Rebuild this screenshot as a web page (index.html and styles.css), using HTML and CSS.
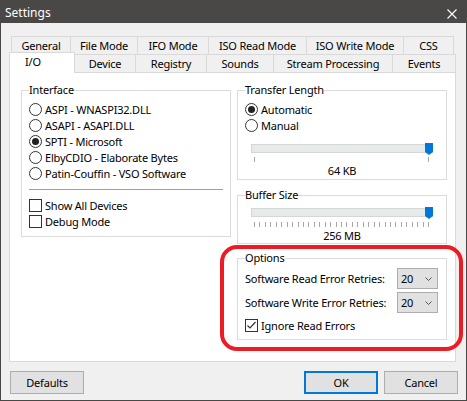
FILE: index.html
```html
<!DOCTYPE html>
<html>
<head>
<meta charset="utf-8">
<title>Settings</title>
<link rel="stylesheet" href="styles.css">
</head>
<body>
<div class="window">
  <div class="titlebar">
    <span class="title">Settings</span>
    <svg class="close" width="10" height="10" viewBox="0 0 10 10"><path d="M0.5 0.5 L9.5 9.5 M9.5 0.5 L0.5 9.5" stroke="#ffffff" stroke-width="1.1" fill="none"/></svg>
  </div>
  <div class="client">
    <div class="tabs">
      <div class="tabrow row1">
        <div class="tab w-general">General</div>
        <div class="tab w-filemode">File Mode</div>
        <div class="tab w-ifomode">IFO Mode</div>
        <div class="tab w-isoread">ISO Read Mode</div>
        <div class="tab w-isowrite">ISO Write Mode</div>
        <div class="tab w-css">CSS</div>
      </div>
      <div class="tabrow row2">
        <div class="tab tab-selected w-io">I/O</div>
        <div class="tab w-device">Device</div>
        <div class="tab w-registry">Registry</div>
        <div class="tab w-sounds">Sounds</div>
        <div class="tab w-stream">Stream Processing</div>
        <div class="tab w-events">Events</div>
      </div>
    </div>
    <div class="page">
      <fieldset class="group group-interface">
        <legend>Interface</legend>
        <div class="opt"><span class="radio"></span>ASPI - WNASPI32.DLL</div>
        <div class="opt"><span class="radio"></span>ASAPI - ASAPI.DLL</div>
        <div class="opt"><span class="radio radio-on"></span>SPTI - Microsoft</div>
        <div class="opt"><span class="radio"></span>ElbyCDIO - Elaborate Bytes</div>
        <div class="opt"><span class="radio"></span>Patin-Couffin - VSO Software</div>
        <div class="sep"></div>
        <div class="opt"><span class="check"></span>Show All Devices</div>
        <div class="opt"><span class="check"></span>Debug Mode</div>
      </fieldset>
      <div class="col-right">
        <fieldset class="group group-transfer">
          <legend>Transfer Length</legend>
          <div class="opt"><span class="radio radio-on"></span>Automatic</div>
          <div class="opt"><span class="radio"></span>Manual</div>
          <div class="slider slider-transfer">
            <div class="track"><svg class="thumb" width="8" height="12" viewBox="0 0 8 12"><path d="M0 0 H8 V9 L4 12 L0 9 Z" fill="#0078d7"/></svg></div>
            <div class="ticks"><i></i><i></i></div>
          </div>
          <div class="slider-value">64 KB</div>
        </fieldset>
        <fieldset class="group group-buffer">
          <legend>Buffer Size</legend>
          <div class="slider slider-buffer">
            <div class="track"><svg class="thumb" width="8" height="12" viewBox="0 0 8 12"><path d="M0 0 H8 V9 L4 12 L0 9 Z" fill="#0078d7"/></svg></div>
            <div class="ticks"><i></i><i></i><i></i><i></i><i></i><i></i><i></i><i></i><i></i><i></i><i></i><i></i><i></i><i></i><i></i><i></i><i></i><i></i><i></i><i></i><i></i><i></i><i></i><i></i><i></i><i></i><i></i><i></i><i></i><i></i><i></i><i></i><i></i></div>
          </div>
          <div class="slider-value">256 MB</div>
        </fieldset>
        <fieldset class="group group-options">
          <legend>Options</legend>
          <div class="field-row">
            <span>Software Read Error Retries:</span>
            <div class="combo"><span>20</span><svg class="chev" width="7" height="4" viewBox="0 0 7 4"><path d="M0.5 0.5 L3.5 3.5 L6.5 0.5" stroke="#555" stroke-width="1" fill="none"/></svg></div>
          </div>
          <div class="field-row field-row-2">
            <span>Software Write Error Retries:</span>
            <div class="combo"><span>20</span><svg class="chev" width="7" height="4" viewBox="0 0 7 4"><path d="M0.5 0.5 L3.5 3.5 L6.5 0.5" stroke="#555" stroke-width="1" fill="none"/></svg></div>
          </div>
          <div class="opt opt-ignore"><span class="check"><svg width="11" height="11" viewBox="0 0 11 11"><path d="M1.5 5.5 L4 8 L9.5 2" stroke="#333" stroke-width="1.2" fill="none"/></svg></span>Ignore Read Errors</div>
        </fieldset>
      </div>
    </div>
    <div class="buttons">
      <div class="btn">Defaults</div>
      <div class="spacer"></div>
      <div class="btn btn-default">OK</div>
      <div class="btn">Cancel</div>
    </div>
  </div>
  <div class="highlight"></div>
</div>
</body>
</html>
```
FILE: styles.css
```css
html, body {
  margin: 0;
  padding: 0;
  background: #f0f0f0;
}
body {
  font-family: "Noto Sans", "Open Sans", sans-serif;
  font-size: 11px;
  letter-spacing: -0.2px;
  color: #000;
}
.window {
  position: relative;
  width: 467px;
  height: 401px;
  box-sizing: border-box;
  border: 1px solid #4a4846;
  background: #f0f0f0;
  overflow: hidden;
}
.titlebar {
  height: 22px;
  background: #4a4846;
  color: #fff;
  display: flex;
  align-items: center;
  justify-content: space-between;
  padding: 0 9px 0 4px;
}
.title {
  font-size: 12px;
  line-height: 16px;
  padding-top: 2px;
  letter-spacing: 0;
}
.close {
  display: block;
  margin-top: 3px;
}
.client {
  padding-top: 13px;
}
.tabs {
  margin-left: 8px;
  width: 447px;
}
.tabrow {
  display: flex;
  height: 18px;
}
.row1 {
  margin-left: 2px;
}
.row2 {
  align-items: flex-end;
}
.tab {
  box-sizing: border-box;
  height: 18px;
  border: 1px solid #d9d9d9;
  border-bottom: none;
  background: #f0f0f0;
  text-align: center;
  line-height: 17px;
  margin-left: -1px;
  white-space: nowrap;
}
.tab:first-child {
  margin-left: 0;
}
.tab-selected {
  position: relative;
  z-index: 2;
  height: 21px;
  margin-bottom: -1px;
  background: #fff;
  text-align: left;
  padding-left: 15px;
  padding-top: 1px;
  line-height: 16px;
}
.w-general { width: 60px; }
.w-filemode { width: 68px; }
.w-ifomode { width: 72px; }
.w-isoread { width: 99px; }
.w-isowrite { width: 98px; }
.w-css { width: 51px; }
.w-io { width: 66px; }
.w-device { width: 62px; }
.w-registry { width: 72px; }
.w-sounds { width: 68px; }
.w-stream { width: 120px; }
.w-events { width: 64px; }

.page {
  position: relative;
  z-index: 1;
  margin-left: 8px;
  width: 447px;
  height: 290px;
  box-sizing: border-box;
  border: 1px solid #d9d9d9;
  background: #fff;
  padding: 9px 0 0 11px;
  display: flex;
  align-items: flex-start;
  gap: 6px;
}
.group {
  margin: 0;
  border: 1px solid #dcdcdc;
  padding: 3px 7px 7px 7px;
  width: 210px;
  box-sizing: border-box;
  min-width: 0;
}
.group legend {
  padding: 0;
  line-height: 16px;
}
.col-right {
  display: flex;
  flex-direction: column;
  width: 210px;
}
.opt {
  display: flex;
  align-items: center;
  height: 16px;
  white-space: nowrap;
}
.radio {
  width: 13px;
  height: 13px;
  box-sizing: border-box;
  border: 1px solid #333;
  border-radius: 50%;
  background: #fff;
  margin-right: 3px;
  display: flex;
  align-items: center;
  justify-content: center;
  flex: none;
}
.radio-on::after {
  content: "";
  width: 7px;
  height: 7px;
  border-radius: 50%;
  background: #222;
}
.check {
  width: 13px;
  height: 13px;
  box-sizing: border-box;
  border: 1px solid #333;
  background: #fff;
  margin-right: 3px;
  flex: none;
  display: flex;
}
.check svg {
  display: block;
}
.sep {
  height: 1px;
  background: #a0a0a0;
  margin: 8px 0 7px 0;
}
.group-transfer {
  padding-bottom: 1px;
}
.group-buffer {
  margin-top: 7px;
  padding-top: 5px;
  padding-bottom: 0;
}
.group-options {
  margin-top: 6px;
  padding: 2px 7px 6px 7px;
}
.slider {
  margin-left: 6px;
  width: 182px;
}
.slider-transfer {
  margin-top: 11px;
}
.track {
  position: relative;
  height: 9px;
  box-sizing: border-box;
  border: 1px solid #d6d6d6;
  background: #e7eaea;
}
.thumb {
  position: absolute;
  right: -1px;
  top: -2px;
  display: block;
}
.ticks {
  display: flex;
  justify-content: space-between;
  height: 5px;
  margin: 4px 4px 0 3px;
}
.slider-buffer .ticks {
  margin-top: 5px;
}
.ticks i {
  width: 1px;
  background: #a8a8a8;
}
.slider-value {
  text-align: center;
  line-height: 14px;
  margin-top: 2px;
}
.field-row {
  display: flex;
  align-items: center;
  justify-content: space-between;
  height: 21px;
  white-space: nowrap;
}
.field-row-2 {
  margin-top: 3px;
}
.combo {
  width: 41px;
  height: 21px;
  box-sizing: border-box;
  border: 1px solid #adadad;
  background: #e1e1e1;
  margin-right: 1px;
  display: flex;
  align-items: center;
  justify-content: space-between;
  padding: 0 5px 0 3px;
}
.chev {
  display: block;
}
.opt-ignore {
  margin-top: 4px;
}
.buttons {
  display: flex;
  margin-top: 9px;
  padding: 0 8px 0 9px;
  gap: 6px;
}
.spacer {
  flex: 1;
}
.btn {
  width: 74px;
  height: 23px;
  box-sizing: border-box;
  border: 1px solid #adadad;
  background: #e1e1e1;
  display: flex;
  align-items: center;
  justify-content: center;
}
.btn-default {
  border: 2px solid #0078d7;
}
.highlight {
  position: absolute;
  left: 219px;
  top: 244px;
  width: 243px;
  height: 106px;
  box-sizing: border-box;
  border: 4px solid #ed1c24;
  border-radius: 17px;
  z-index: 5;
}
```
